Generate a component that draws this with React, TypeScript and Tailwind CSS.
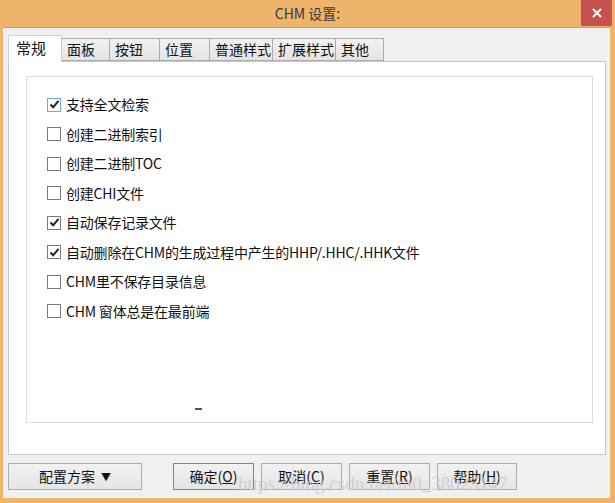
import type { ReactNode } from 'react'

const cjk = "font-['Noto_Sans_CJK_SC','Noto_Sans',sans-serif]"

const tabs: Array<{ label: string; w: number }> = [
  { label: '常规', w: 54 },
  { label: '面板', w: 49 },
  { label: '按钮', w: 51 },
  { label: '位置', w: 51 },
  { label: '普通样式', w: 64 },
  { label: '扩展样式', w: 64 },
  { label: '其他', w: 49 },
]

const options: Array<{ label: string; checked: boolean; focus?: boolean }> = [
  { label: '支持全文检索', checked: true, focus: true },
  { label: '创建二进制索引', checked: false },
  { label: '创建二进制TOC', checked: false },
  { label: '创建CHI文件', checked: false },
  { label: '自动保存记录文件', checked: true },
  { label: '自动删除在CHM的生成过程中产生的HHP/.HHC/.HHK文件', checked: true },
  { label: 'CHM里不保存目录信息', checked: false },
  { label: 'CHM 窗体总是在最前端', checked: false },
]

const Checkbox = ({ checked, focus }: { checked: boolean; focus?: boolean }) => (
  <span
    className={`flex h-[14px] w-[14px] shrink-0 items-center justify-center border bg-white ${focus ? 'border-[#6ea6e6]' : 'border-[#7a7a7a]'}`}
  >
    {checked ? (
      <svg width="11" height="11" viewBox="0 0 11 11">
        <path d="M1.5 5.5 L4.2 8.3 L9.5 1.8" fill="none" stroke="#222" strokeWidth="2" />
      </svg>
    ) : null}
  </span>
)

const Btn = ({ children, w, focus }: { children: ReactNode; w: number; focus?: boolean }) => (
  <div
    style={{ width: w }}
    className={`flex h-[27px] items-center justify-center border bg-gradient-to-b from-[#f2f2f2] to-[#e5e5e5] text-[14px] text-[#111] ${focus ? 'border-[#3c95e6]' : 'border-[#adadad]'}`}
  >
    {children}
  </div>
)

export default function App() {
  return (
    <div className={`relative flex h-[503px] w-[615px] flex-col bg-[#eeb46c] ${cjk}`}>
      <div className="relative flex h-[27px] shrink-0 items-center justify-center">
        <span className="text-[14px] text-[#3a3a3a]">CHM 设置:</span>
        <div className="absolute right-[3px] top-0 flex h-[26px] w-[31px] items-center justify-center bg-[#c75050]">
          <svg width="10" height="10" viewBox="0 0 10 10">
            <path d="M1 1 L9 9 M9 1 L1 9" stroke="#fff" strokeWidth="2" />
          </svg>
        </div>
      </div>

      <div className="mb-[5px] ml-[3px] mr-[5px] flex flex-1 flex-col border-t border-[#d99a55] bg-[#f0f0f0] pl-[5px] pr-[4px] pt-[6px]">
        <div className="flex h-[27px] items-end">
          {tabs.map((t, i) =>
            i === 0 ? (
              <div
                key={t.label}
                style={{ width: t.w }}
                className="relative z-10 -mb-px flex h-[27px] items-center whitespace-nowrap border border-b-0 border-[#d0d0d0] bg-white pl-[7px] pb-[2px] text-[15px] text-[#111]"
              >
                {t.label}
              </div>
            ) : (
              <div
                key={t.label}
                style={{ width: t.w }}
                className="-ml-px flex h-[23px] items-center whitespace-nowrap border border-[#acacac] bg-gradient-to-b from-[#f2f2f2] to-[#e4e4e4] pl-[5px] text-[14px] text-[#111] first:ml-0"
              >
                {t.label}
              </div>
            ),
          )}
        </div>

        <div className="flex h-[394px] flex-col border border-[#c8c8c8] bg-white pb-[31px] pl-[17px] pr-[12px] pt-[14px]">
          <div className="relative flex flex-1 flex-col border border-[#dcdcdc] pl-[20px] pt-[13px]">
            {options.map((o) => (
              <div key={o.label} className="flex h-[29.5px] items-center gap-[5px] text-[14px] text-[#111]">
                <Checkbox checked={o.checked} focus={o.focus} />
                <span className="whitespace-nowrap tracking-[-0.2px]">{o.label}</span>
              </div>
            ))}
            <div className="absolute left-[168px] top-[331px] h-[2px] w-[7px] bg-[#555]" />
          </div>
        </div>

        <div className="relative mt-[8px] flex items-center">
          <Btn w={134}>
            <span>配置方案</span>
            <span className="ml-[6px] text-[10px]">▼</span>
          </Btn>
          <div className="ml-[31px] flex gap-[7px]">
            <Btn w={81} focus>
              确定(<span className="underline">O</span>)
            </Btn>
            <Btn w={81}>
              取消(<span className="underline">C</span>)
            </Btn>
            <Btn w={81}>
              重置(<span className="underline">R</span>)
            </Btn>
            <Btn w={80}>
              帮助(<span className="underline">H</span>)
            </Btn>
          </div>
          <span className="pointer-events-none absolute left-[230px] top-[7px] whitespace-nowrap font-['Liberation_Serif',serif] text-[19px] text-[#c8c8c8]/80">
            https://blog.csdn.net/m0_38025147
          </span>
        </div>
      </div>
    </div>
  )
}
